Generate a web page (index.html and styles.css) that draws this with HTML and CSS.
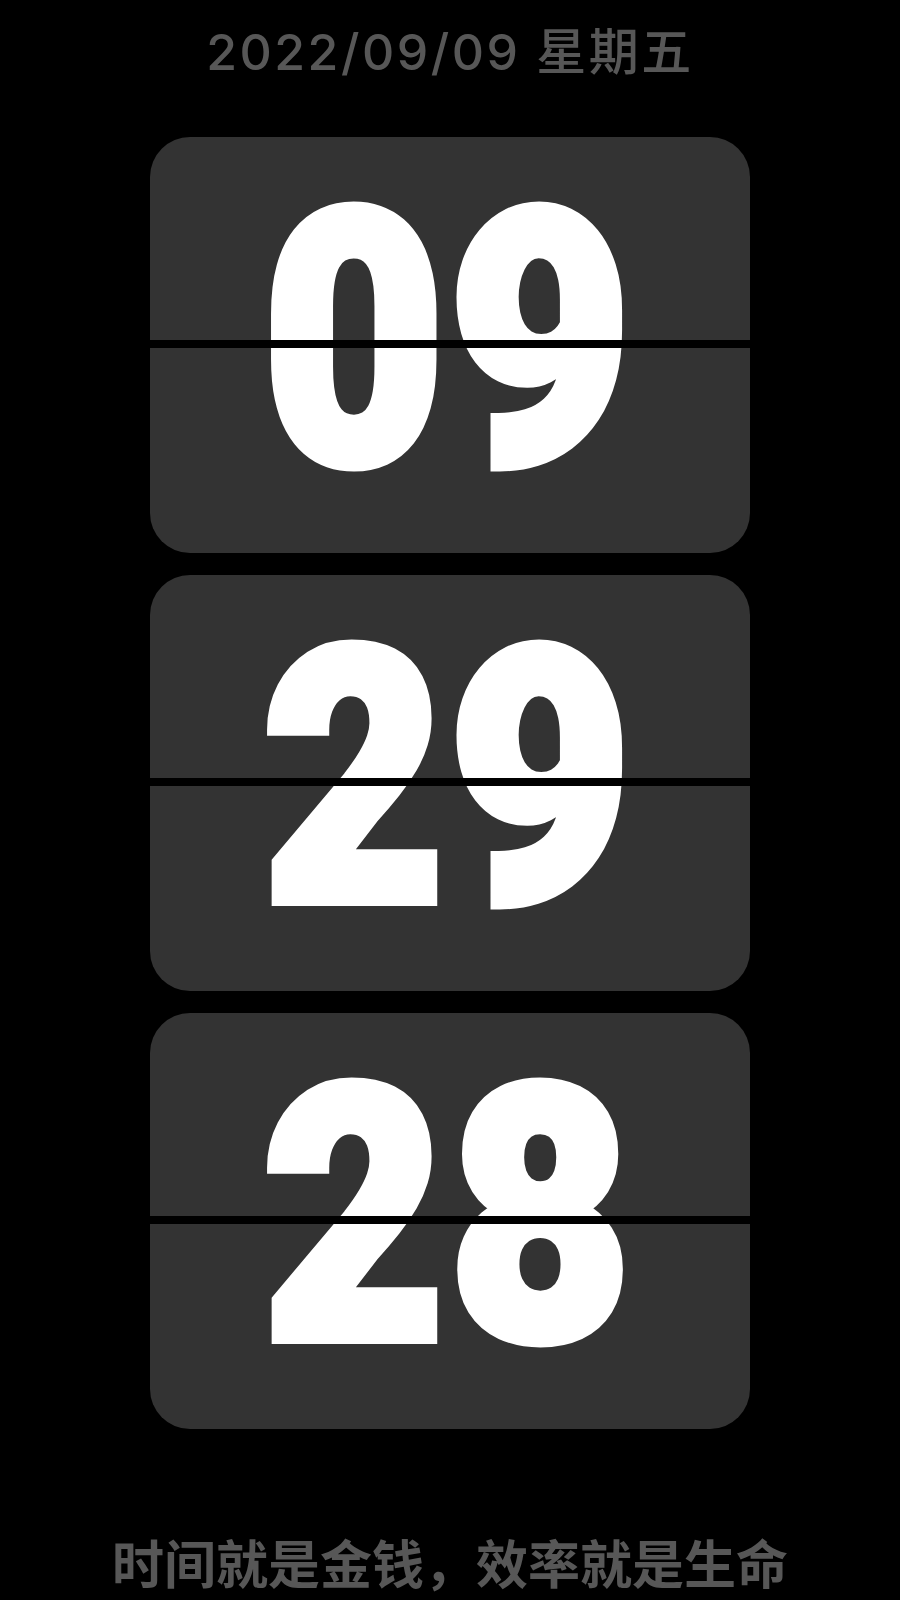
FILE: index.html
```html
<!DOCTYPE html>
<html lang="zh-CN">
<head>
<meta charset="utf-8">
<title>Flip Clock</title>
<link rel="stylesheet" href="styles.css">
</head>
<body>
<main class="clock">
  <div class="date">2022/09/09 星期五</div>
  <div class="cards">
    <div class="card"><span class="digits">09</span></div>
    <div class="card"><span class="digits">29</span></div>
    <div class="card"><span class="digits">28</span></div>
  </div>
  <div class="motto">时间就是金钱，效率就是生命</div>
</main>
</body>
</html>
```

FILE: styles.css
```css
html, body {
  margin: 0;
  padding: 0;
  background: #000;
}

.clock {
  width: 900px;
  height: 1600px;
  display: flex;
  flex-direction: column;
  align-items: center;
  overflow: hidden;
}

.date {
  margin-top: 27px;
  height: 50px;
  font-family: Inter, "Noto Sans CJK SC", sans-serif;
  font-weight: 500;
  font-size: 50px;
  line-height: 50px;
  letter-spacing: 2.5px;
  color: #575757;
  white-space: nowrap;
}

.cards {
  margin-top: 60px;
  display: flex;
  flex-direction: column;
  gap: 22px;
}

.card {
  position: relative;
  width: 600px;
  height: 416px;
  border-radius: 40px;
  background: #333333;
  display: flex;
  align-items: center;
  justify-content: center;
  overflow: hidden;
}

.card::after {
  content: "";
  position: absolute;
  left: 0;
  right: 0;
  top: 203px;
  height: 8px;
  background: #000;
}

.digits {
  display: block;
  margin-bottom: 6px;
  font-family: Roboto, sans-serif;
  font-weight: 900;
  font-size: 353px;
  line-height: 370px;
  letter-spacing: 6px;
  color: #fff;
  -webkit-text-stroke: 12px #fff;
  transform: scaleX(0.885);
  white-space: nowrap;
}

.motto {
  margin-top: 103px;
  font-family: "Noto Sans CJK SC", sans-serif;
  font-weight: 700;
  font-size: 52px;
  line-height: 60px;
  color: #575757;
  white-space: nowrap;
}
```
